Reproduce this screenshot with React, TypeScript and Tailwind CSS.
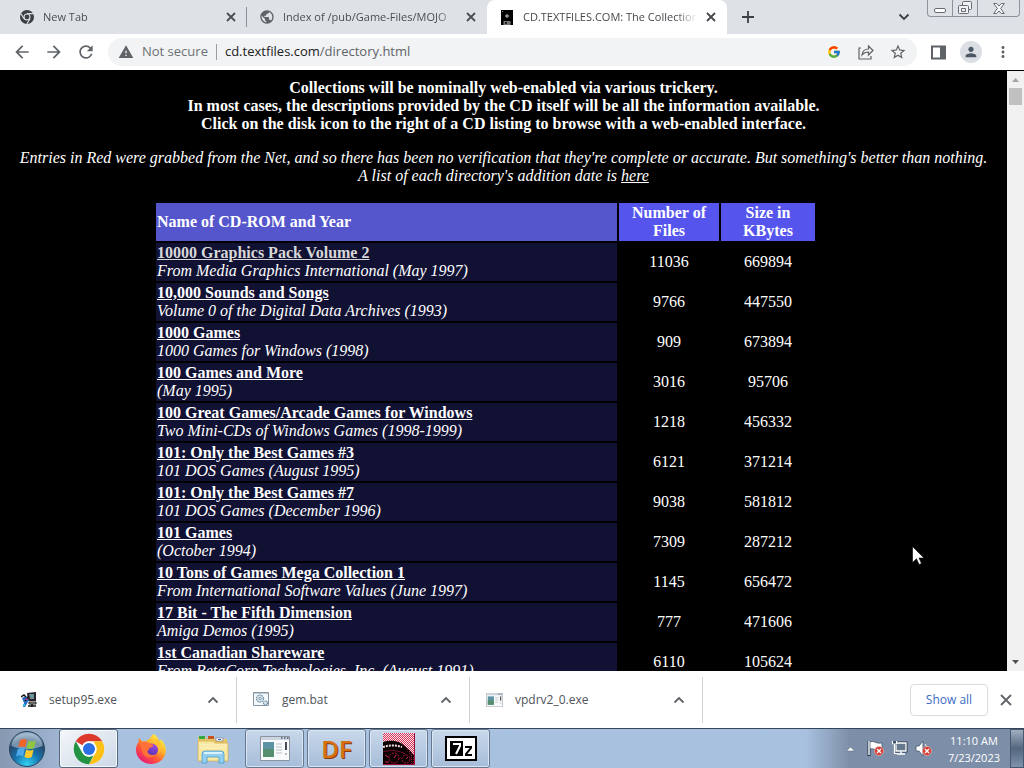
import type { ReactNode } from "react";
import { FcGoogle } from "react-icons/fc";
import {
  MdArrowBack,
  MdArrowForward,
  MdMoreVert,
  MdPerson,
  MdPublic,
  MdRefresh,
  MdStarBorder,
  MdWarning,
} from "react-icons/md";

type Entry = { name: string; note: string; files: string; size: string; visited?: boolean };

const entries: Entry[] = [
  { name: "10000 Graphics Pack Volume 2", note: "From Media Graphics International (May 1997)", files: "11036", size: "669894", visited: true },
  { name: "10,000 Sounds and Songs", note: "Volume 0 of the Digital Data Archives (1993)", files: "9766", size: "447550" },
  { name: "1000 Games", note: "1000 Games for Windows (1998)", files: "909", size: "673894" },
  { name: "100 Games and More", note: "(May 1995)", files: "3016", size: "95706" },
  { name: "100 Great Games/Arcade Games for Windows", note: "Two Mini-CDs of Windows Games (1998-1999)", files: "1218", size: "456332" },
  { name: "101: Only the Best Games #3", note: "101 DOS Games (August 1995)", files: "6121", size: "371214" },
  { name: "101: Only the Best Games #7", note: "101 DOS Games (December 1996)", files: "9038", size: "581812" },
  { name: "101 Games", note: "(October 1994)", files: "7309", size: "287212" },
  { name: "10 Tons of Games Mega Collection 1", note: "From International Software Values (June 1997)", files: "1145", size: "656472" },
  { name: "17 Bit - The Fifth Dimension", note: "Amiga Demos (1995)", files: "777", size: "471606" },
  { name: "1st Canadian Shareware", note: "From BetaCorp Technologies, Inc. (August 1991)", files: "6110", size: "105624" },
];

const lineIcons = {
  close: "M4 4l8 8M12 4l-8 8",
  plus: "M8 2v12M2 8h12",
  up: "M3.500 10.500L8 6l4.500 4.500",
  down: "M3.500 5.500L8 10l4.500-4.500",
};

function LineIcon({ kind }: { kind: keyof typeof lineIcons }) {
  return (
    <svg viewBox="0 0 16 16" className="size-4" fill="none" stroke="currentColor" strokeWidth="1.800" aria-hidden="true">
      <path d={lineIcons[kind]} />
    </svg>
  );
}

function ChromeMono() {
  return (
    <svg viewBox="0 0 16 16" className="size-4 shrink-0" aria-hidden="true">
      <circle cx="8" cy="8" r="7" fill="#3c4043" />
      <path d="M8 4.6h6.4M5 9.8 1.9 4.4M11 9.7 7.8 15" stroke="#dee1e6" strokeWidth="1.1" />
      <circle cx="8" cy="8" r="3.5" fill="#dee1e6" />
      <circle cx="8" cy="8" r="2.4" fill="#3c4043" />
    </svg>
  );
}

function FloppyIcon() {
  return (
    <svg viewBox="0 0 12 15" className="h-[15px] w-3 shrink-0" aria-hidden="true">
      <path d="M0 0h12v15H0z" fill="#000" />
      <path d="M6 4v4M4 6h4" stroke="#999" strokeWidth="1.4" />
      <path d="M2.5 11h7v4h-7z" fill="#777" />
      <path d="M4 12h2v2H4z" fill="#222" />
      <path d="M1 1h1v1H1z" fill="#888" />
    </svg>
  );
}

function ChromeLogo() {
  return (
    <svg viewBox="0 0 48 48" className="size-8" aria-hidden="true">
      <circle cx="24" cy="24" r="23" fill="#fff" />
      <path d="M24 1a23 23 0 0 1 19.9 11.5H24A11.5 11.5 0 0 0 14 18.2L4.1 12.5A23 23 0 0 1 24 1z" fill="#dc3a2c" />
      <path d="M43.9 12.5A23 23 0 0 1 24 47l9.9-17.2a11.5 11.5 0 0 0 0-11.5L30.5 12.5z" fill="#fbc116" />
      <path d="M24 47A23 23 0 0 1 4.1 12.5L14 29.7A11.5 11.5 0 0 0 24 35.5a11.5 11.5 0 0 0 6.8-2.2z" fill="#229342" />
      <circle cx="24" cy="24" r="11.3" fill="#fff" />
      <circle cx="24" cy="24" r="9" fill="#2a6fe4" />
    </svg>
  );
}

function FirefoxLogo() {
  return (
    <svg viewBox="0 0 32 32" className="size-8" aria-hidden="true">
      <defs>
        <linearGradient id="foxBody" x1="0.85" y1="0.1" x2="0.2" y2="0.95">
          <stop offset="0" stopColor="#fff14a" />
          <stop offset="0.35" stopColor="#ffb02a" />
          <stop offset="0.65" stopColor="#ff5634" />
          <stop offset="1" stopColor="#e8167c" />
        </linearGradient>
        <linearGradient id="foxGlobe" x1="0.7" y1="0" x2="0.3" y2="1">
          <stop offset="0" stopColor="#a14be8" />
          <stop offset="1" stopColor="#4d2fb0" />
        </linearGradient>
      </defs>
      <path d="M18.5 1c4 2.200 4.800 5 5.500 7l2-1.500c3.500 3.500 5.500 8 4.800 12.500C29.700 26.500 23.500 31 16 31S1.500 25.500 1 17.500C.8 14 2 11 3.500 9l.3-4 3.700 3.500c1.300-.3 2.500-.2 3.500.2C12.500 6.500 14 5.800 15.500 5.500 15.500 3.500 17 2 18.500 1z" fill="url(#foxBody)" />
      <circle cx="16.500" cy="17" r="6.500" fill="url(#foxGlobe)" />
      <path d="M5 11c3-3 7-3 9.500-.5 1.500 1 3 1 4 1.300-.2 2-2 2.700-4 3.200-.5 2-2 2.500-2 4 1.500 3.500 6 3.500 9 2-2 4-9 5-12.500 1C6.500 19.500 7 15 5 11z" fill="#ff7139" />
      <path d="M20 10.500c4 2 5 7 2.500 10.500 5-3 5-11-.5-15-1 1.500-1.500 3-2 4.500z" fill="#ffc22e" />
    </svg>
  );
}

function ExplorerIcon() {
  return (
    <svg viewBox="0 0 32 30" className="size-8" aria-hidden="true">
      <path d="M1 3h8l1 2h20v22H1z" fill="#e6c765" />
      <path d="M2 2h6v3H2z" fill="#36a746" />
      <path d="M11 2h6v3h-6z" fill="#c8501e" />
      <path d="M19 4h7v3h-7z" fill="#fff" stroke="#779" strokeWidth=".6" />
      <path d="M21 5h3v1h-3z" fill="#276bbd" />
      <path d="M1 7h15l2 2h13v18H1z" fill="#f9e8a0" stroke="#cfae52" strokeWidth=".7" />
      <path d="M3 11h26M3 14h26" stroke="#fdf4c8" />
      <path d="M5 29v-9q0-3 3-3h16q3 0 3 3v9h-5v-6H10v6z" fill="#91cff0" stroke="#4d9ccd" strokeWidth=".8" />
      <path d="M7 19h18" stroke="#d9f2ff" strokeWidth="2" />
    </svg>
  );
}

function AppWindow({ className }: { className: string }) {
  return (
    <svg viewBox="0 0 30 25" className={className} aria-hidden="true">
      <path d="M.5.5h29v24H.5z" fill="#f8fafb" stroke="#8b949e" />
      <path d="M1 1h28v3H1z" fill="#ccd6e0" />
      <path d="M21 2h1.500M24 2h1.500M27 2h1.500" stroke="#45566b" strokeWidth="1.500" />
      <path d="M3 6h11v15H3z" fill="#5b93a5" />
      <path d="M3 13h11v8H3z" fill="#568f70" />
      <path d="M16 8h6M16 11h6M16 14h6M16 17h6" stroke="#b9c0c5" />
      <path d="M26 6v8" stroke="#444d58" strokeWidth="2" />
      <path d="M25 17h2v2h-2z" fill="#bbb" />
    </svg>
  );
}

function StartOrb() {
  return (
    <svg viewBox="0 0 38 38" className="size-[38px]" aria-hidden="true">
      <defs>
        <radialGradient id="orb" cx="0.5" cy="0.95" r="0.85">
          <stop offset="0" stopColor="#35d3f4" />
          <stop offset="0.45" stopColor="#1573ae" />
          <stop offset="0.8" stopColor="#284a6c" />
          <stop offset="1" stopColor="#7190ad" />
        </radialGradient>
      </defs>
      <circle cx="19" cy="19" r="17.500" fill="url(#orb)" stroke="#29425d" />
      <path d="M3.500 16C5 7 11 2.500 19 2.500S33 7 34.500 16c-9 4-21 4-31 0z" fill="#d8e6f2" opacity=".45" />
      <path d="M12 10c3-1.500 5-1.300 7 0l-1.800 7.500c-2.300-1.200-4.700-1.200-7 0z" fill="#ed6529" />
      <path d="M20.500 10.500c2.500 1.300 5 1.200 7.500 0l-1.900 7.500c-2.500 1.200-5 1.200-7.400 0z" fill="#8fc743" />
      <path d="M9.800 19c2.500-1.300 4.800-1.200 7 0L15 26.500c-2.300-1.300-4.600-1.200-7 0z" fill="#4ca8e8" />
      <path d="M18.200 19.500c2.500 1.300 5 1.200 7.400 0l-1.800 7.500c-2.500 1.200-5 1.200-7.400 0z" fill="#fdc92f" />
    </svg>
  );
}

function DashboardIcon() {
  return (
    <svg viewBox="0 0 32 32" className="size-8" aria-hidden="true">
      <defs>
        <pattern id="redDither" width="2" height="2" patternUnits="userSpaceOnUse">
          <path d="M0 0h2v2H0z" fill="#d6305a" />
          <path d="M0 0h1v1H0zM1 1h1v1H1z" fill="#fbe6e8" />
        </pattern>
        <pattern id="darkDither" width="2" height="2" patternUnits="userSpaceOnUse">
          <path d="M0 0h2v2H0z" fill="#1a0308" />
          <path d="M0 0h1v1H0z" fill="#9d1836" />
        </pattern>
      </defs>
      <path d="M0 0h32v32H0z" fill="url(#redDither)" />
      <path d="M0 9c9-3 18-1 24 6 4 3 6 6 8 9v8H0z" fill="#080103" />
      <path d="M0 14c6-2 13-2 19 0" fill="none" stroke="#f4dde1" strokeWidth="2" strokeDasharray="2 1" />
      <path d="M22 15l5 3 4 6v7h-3l-1-9z" fill="url(#darkDither)" />
      <path d="M0 19c9-3 17-1 22 2" fill="none" stroke="#7a1028" />
      <circle cx="11" cy="25" r="5" fill="none" stroke="#b3183b" strokeDasharray="2 1" />
      <circle cx="23" cy="26" r="4" fill="none" stroke="#b3183b" strokeDasharray="2 1" />
      <path d="M11 25l2-3M23 26l2-2M2 22l3 2M2 29h4" stroke="#d82b4d" />
      <path d="M31 0h1v32H0v-1h31z" fill="#a00d34" />
    </svg>
  );
}

function SevenZip() {
  return (
    <svg viewBox="0 0 32 25" className="h-[25px] w-8" role="img" aria-label="7z">
      <path d="M1 1h30v23H1z" fill="#fff" stroke="#000" strokeWidth="2" />
      <path d="M5 5h13v15H5z" fill="#000" />
      <path d="M8 8h7v2l-4 8" fill="none" stroke="#fff" strokeWidth="2" />
      <path d="M20 11h6v1l-5 6v1h6" fill="none" stroke="#000" strokeWidth="2" />
    </svg>
  );
}

function SetupIcon() {
  return (
    <svg viewBox="0 0 16 16" className="size-4" aria-hidden="true">
      <path d="M6 1l9-1v9H7z" fill="#252525" />
      <path d="M8 2h5v5H9z" fill="#7e8790" />
      <path d="M10 3h2v2h-2z" fill="#35b5aa" />
      <path d="M1 6l4-2 3 4-4 7H2l1-4z" fill="#286fc7" />
      <path d="M0 5l3-2 2 2M8 4L4 9" fill="none" stroke="#161616" strokeWidth="1.500" />
      <path d="M4 8l2-2 1 2z" fill="#c43ab0" />
      <path d="M8 10h7v2H8z" fill="#aaa" stroke="#222" />
      <path d="M7 14h8M11 12v3" stroke="#111" strokeWidth="1.500" />
      <path d="M2 12h2v2H2z" fill="#35c5dd" />
    </svg>
  );
}

function BatchIcon() {
  return (
    <svg viewBox="0 0 17 15" className="h-[15px] w-[17px]" aria-hidden="true">
      <path d="M.5.5h15v13H.5z" fill="#f4f8fa" stroke="#8696a2" />
      <path d="M1 1.500h14" stroke="#bdc9d3" />
      <circle cx="7" cy="6.500" r="3.500" fill="#dce7ef" stroke="#7897ac" strokeWidth="1.300" strokeDasharray="1.500 .7" />
      <circle cx="7" cy="6.500" r="1.200" fill="#fff" stroke="#7897ac" />
      <circle cx="12.500" cy="11" r="2" fill="#dce7ef" stroke="#68889d" strokeWidth="1.200" strokeDasharray="1 .5" />
    </svg>
  );
}

function ErrorBadge() {
  return (
    <g>
      <circle cx="12" cy="11" r="4.500" fill="#d53a32" stroke="#eab4b0" strokeWidth=".7" />
      <path d="M10 9l4 4M14 9l-4 4" stroke="#fff" strokeWidth="1.400" />
    </g>
  );
}

function ActionFlag() {
  return (
    <svg viewBox="0 0 17 17" className="size-[17px]" aria-hidden="true">
      <path d="M2 1v15" stroke="#26384e" strokeWidth="3" />
      <path d="M3 2c4-2 5 2 12 1v7c-6 1-8-2-12-1z" fill="#fff" stroke="#38485d" strokeWidth=".7" />
      <path d="M2 1v14" stroke="#fff" strokeWidth="1.400" />
      <ErrorBadge />
    </svg>
  );
}

function NetworkIcon() {
  return (
    <svg viewBox="0 0 17 17" className="size-[17px]" aria-hidden="true">
      <path d="M5 3h10v8H5z" fill="#64788e" stroke="#26384e" strokeWidth="3" />
      <path d="M5 3h10v8H5z" fill="#64788e" stroke="#fff" strokeWidth="1.300" />
      <path d="M10 11.500v2M6 14h8" stroke="#fff" strokeWidth="1.500" />
      <path d="M1 1h5v4H1z" fill="#32465d" />
      <path d="M1.500 1v3h4V1M3.500 4v9.500H6" fill="none" stroke="#fff" strokeWidth="1.200" />
    </svg>
  );
}

function SpeakerIcon() {
  return (
    <svg viewBox="0 0 17 17" className="size-[17px]" aria-hidden="true">
      <path d="M1 6h3l4-5v15l-4-5H1z" fill="#fff" stroke="#44566d" strokeWidth=".8" />
      <path d="M10 4c2 2 2 6 0 9" fill="none" stroke="#fff" />
      <ErrorBadge />
    </svg>
  );
}

function Tab({ icon, title, active, divider }: { icon: ReactNode; title: string; active?: boolean; divider?: boolean }) {
  return (
    <div
      className={`relative flex h-full w-[240px] shrink-0 items-center pr-2 pl-3 text-[11px] ${active ? "rounded-t-lg bg-white text-[#45494d]" : "text-[#4a4e52]"}`}
    >
      <span className="flex w-4 shrink-0 justify-center">{icon}</span>
      <button className="ml-2 w-[174px] overflow-hidden text-left whitespace-nowrap [mask-image:linear-gradient(to_right,black_88%,transparent)]">
        {title}
      </button>
      <button aria-label={`Close ${title}`} className="ml-1.5">
        <LineIcon kind="close" />
      </button>
      {divider && <span className="absolute right-0 h-5 w-px bg-[#8b9096]" />}
    </div>
  );
}

function Download({ icon, name }: { icon: ReactNode; name: string }) {
  return (
    <div className="flex h-[46px] w-[233px] items-center border-r border-[#cfd1d4] pr-[15px] pl-4">
      <span className="flex w-[17px] justify-center">{icon}</span>
      <button className="ml-3 flex-1 text-left">{name}</button>
      <button aria-label={`Options for ${name}`} className="text-[#5f6368]">
        <LineIcon kind="up" />
      </button>
    </div>
  );
}

function TaskButton({ label, children, look }: { label: string; children: ReactNode; look: "plain" | "open" | "active" }) {
  const frame =
    look === "active"
      ? "border-[#56677e] bg-linear-to-br from-[#f4f6f9] to-[#ccd8e7] shadow-[inset_0_0_0_1px_#f4f8fc]"
      : look === "open"
        ? "border-[#65788f] bg-linear-to-b from-[#c9d8ea] to-[#a6bdd9] shadow-[inset_0_0_0_1px_#d9e5f2]"
        : "border-transparent";
  return (
    <button aria-label={label} className={`flex h-[39px] w-[59px] items-center justify-center rounded-[3px] border ${frame}`}>
      {children}
    </button>
  );
}

export default function App() {
  return (
    <div className="relative flex h-screen flex-col overflow-hidden bg-white font-['Open_Sans','Noto_Sans',sans-serif] text-xs text-[#3c4043]">
      <header className="shrink-0">
        <div className="flex h-[34px] items-stretch bg-[#dee1e6] pl-[7px]">
          <nav className="flex" aria-label="Tabs">
            <Tab icon={<ChromeMono />} title="New Tab" divider />
            <Tab icon={<MdPublic className="size-4 text-[#5f6368]" />} title="Index of /pub/Game-Files/MOJO" />
            <Tab icon={<FloppyIcon />} title="CD.TEXTFILES.COM: The Collection" active />
          </nav>
          <button aria-label="New tab" className="ml-[13px] self-center">
            <LineIcon kind="plus" />
          </button>
          <button aria-label="Search tabs" className="mr-[15px] ml-auto self-center">
            <LineIcon kind="down" />
          </button>
          <div className="mr-1 flex h-[17px] rounded-b border border-t-0 border-[#8d939c]">
            <button aria-label="Minimize" className="flex w-[25px] items-end justify-center border-r border-[#8d939c] pb-[3px]">
              <svg viewBox="0 0 12 5" className="h-[5px] w-3"><rect x=".5" y=".5" width="11" height="4" rx="1.500" fill="#fff" stroke="#666b73" /></svg>
            </button>
            <button aria-label="Restore" className="flex w-[25px] items-center justify-center border-r border-[#8d939c]">
              <svg viewBox="0 0 14 14" className="size-[14px]">
                <path d="M4.500 1.500q0-1 1-1h7q1 0 1 1v6q0 1-1 1h-2v3q0 1-1 1h-8q-1 0-1-1v-6q0-1 1-1h3z" fill="#f1f2f4" stroke="#666b73" />
                <path d="M4.500 4.500h5q1 0 1 1v3M3.500 7.500h4v3h-4z" fill="none" stroke="#666b73" />
              </svg>
            </button>
            <button aria-label="Close window" className="flex w-[41px] items-center justify-center">
              <svg viewBox="0 0 12 11" className="h-[11px] w-3"><path d="M.7.5h3L6 3 8.300.5h3L7.700 5.500l3.600 5h-3L6 8l-2.300 2.500h-3l3.600-5z" fill="#f5f6f7" stroke="#666b73" /></svg>
            </button>
          </div>
        </div>
        <div className="flex h-9 items-center px-3 text-[#5f6368]">
          <button aria-label="Back"><MdArrowBack className="size-5" /></button>
          <button aria-label="Forward" className="ml-3"><MdArrowForward className="size-5" /></button>
          <button aria-label="Reload" className="ml-3"><MdRefresh className="size-5" /></button>
          <div className="ml-3 flex h-7 flex-1 items-center rounded-full bg-[#f1f3f4] px-2.5 text-[13px]">
            <MdWarning className="size-4" />
            <span className="ml-2 text-[#6c7075]">Not secure</span>
            <span className="mx-2 h-4 w-px bg-[#9a9ea3]" />
            <div className="flex-1 whitespace-nowrap">
              <span className="text-[#202124]">cd.textfiles.com</span>/directory.html
            </div>
            <button aria-label="Search with Google"><FcGoogle className="size-[14px]" /></button>
            <button aria-label="Share" className="ml-4">
              <svg viewBox="0 0 18 16" className="h-4 w-[18px]" fill="none" stroke="#5f6368" strokeWidth="1.200">
                <path d="M4 4H2v11h12v-3" />
                <path d="M5 11c.5-4 3-6 6.500-6V2l4.500 4.500L11.500 11V8C9 8 7 8.500 5 11z" />
              </svg>
            </button>
            <button aria-label="Bookmark" className="ml-3.5"><MdStarBorder className="size-[18px]" /></button>
          </div>
          <button aria-label="Side panel" className="ml-3.5">
            <svg viewBox="0 0 15 15" className="size-[15px]"><path d="M1 1.500h13v12H1z" fill="none" stroke="#5f6368" strokeWidth="2" /><path d="M9 1h5v13H9z" fill="#5f6368" /></svg>
          </button>
          <button aria-label="Profile" className="ml-3.5 flex size-[22px] items-center justify-center rounded-full bg-[#dbdfe4] text-[#4a5866]">
            <MdPerson className="size-4" />
          </button>
          <button aria-label="Menu" className="ml-3"><MdMoreVert className="size-[18px]" /></button>
        </div>
      </header>

      <div className="flex min-h-0 flex-1 border-t border-black bg-black">
        <main className="min-w-0 flex-1 overflow-hidden pt-2 text-center font-['Liberation_Serif',serif] text-base leading-[18px] text-white">
          <p className="mb-4 font-bold">
            Collections will be nominally web-enabled via various trickery.
            <br />
            In most cases, the descriptions provided by the CD itself will be all the information available.
            <br />
            Click on the disk icon to the right of a CD listing to browse with a web-enabled interface.
          </p>
          <p className="mb-4 italic">
            Entries in Red were grabbed from the Net, and so there has been no verification that they're complete or accurate. But something's better than nothing.
            <br />
            A list of each directory's addition date is <a href="#dates" className="underline">here</a>
          </p>
          <table className="mx-auto w-[699px] table-fixed border-separate border-spacing-[2px]">
            <colgroup>
              <col className="w-[461px]" />
              <col className="w-[100px]" />
              <col className="w-[94px]" />
              <col />
            </colgroup>
            <thead>
              <tr>
                <th className="bg-[#5555cc] p-px text-left">Name of CD-ROM and Year</th>
                <th className="bg-[#5555ee] p-px">Number of<br />Files</th>
                <th className="bg-[#5555ee] p-px">Size in<br />KBytes</th>
                <td />
              </tr>
            </thead>
            <tbody>
              {entries.map((e) => (
                <tr key={e.name}>
                  <td className="bg-[#111133] p-px text-left">
                    <a href="#cd" className={`font-bold underline ${e.visited ? "text-[#d8d8d8]" : "text-white"}`}>{e.name}</a>
                    <br />
                    <i>{e.note}</i>
                  </td>
                  <td className="p-px">{e.files}</td>
                  <td className="p-px">{e.size}</td>
                  <td />
                </tr>
              ))}
            </tbody>
          </table>
        </main>
        <div className="flex w-[17px] shrink-0 flex-col items-center bg-[#f1f1f1]" aria-hidden="true">
          <svg viewBox="0 0 17 17" className="size-[17px]"><path d="M5 11l3.500-4 3.500 4z" fill="#a3a3a3" /></svg>
          <div className="h-[17px] w-[13px] bg-[#c1c1c1]" />
          <svg viewBox="0 0 17 17" className="mt-auto size-[17px]"><path d="M5 6l3.500 4L12 6z" fill="#505050" /></svg>
        </div>
      </div>

      <section aria-label="Downloads" className="flex h-[57px] shrink-0 items-center bg-white pr-2.5 pl-1 text-[#50545a]">
        <Download icon={<SetupIcon />} name="setup95.exe" />
        <Download icon={<BatchIcon />} name="gem.bat" />
        <Download icon={<AppWindow className="h-[14px] w-[17px]" />} name="vpdrv2_0.exe" />
        <button className="ml-auto h-8 w-[78px] rounded border border-[#dadce0] text-[#3c6bc4]">Show all</button>
        <button aria-label="Close downloads" className="ml-2.5 text-[#5f6368]">
          <svg viewBox="0 0 16 16" className="size-4"><path d="M3 3l10 10M13 3L3 13" stroke="currentColor" strokeWidth="1.800" /></svg>
        </button>
      </section>

      <footer className="flex h-10 shrink-0 items-center border-t border-[#34455b] bg-linear-to-r from-[#8798b1] via-[#a8c1df] via-8% to-[#a8c1df]">
        <button aria-label="Start" className="ml-2 flex w-[51px]"><StartOrb /></button>
        <div className="flex gap-[3px]">
          <TaskButton label="Google Chrome" look="active"><ChromeLogo /></TaskButton>
          <TaskButton label="Firefox" look="plain"><FirefoxLogo /></TaskButton>
          <TaskButton label="Explorer" look="plain"><ExplorerIcon /></TaskButton>
          <TaskButton label="Installer" look="open"><AppWindow className="h-[25px] w-[30px]" /></TaskButton>
          <TaskButton label="DF" look="open">
            <span className="text-2xl leading-none font-semibold text-[#d8700f] [text-shadow:1px_1px_0_#8c3b0c]">DF</span>
          </TaskButton>
          <TaskButton label="Dashboard" look="open"><DashboardIcon /></TaskButton>
          <TaskButton label="7-Zip" look="open"><SevenZip /></TaskButton>
        </div>
        <div className="ml-auto flex h-full items-center bg-linear-to-r from-transparent to-[#7d8fa8] to-20% pl-10 text-white">
          <button aria-label="Show hidden icons" className="mr-3">
            <svg viewBox="0 0 9 6" className="h-1.5 w-[9px]"><path d="M.5 5l4-4 4 4z" fill="#fff" stroke="#52647b" strokeWidth=".5" /></svg>
          </button>
          <div className="flex gap-[7px]">
            <ActionFlag />
            <NetworkIcon />
            <SpeakerIcon />
          </div>
          <time className="mr-2.5 ml-4 text-center text-[11px] leading-[17px]">
            11:10 AM
            <br />
            7/23/2023
          </time>
          <button aria-label="Show desktop" className="h-full w-[14px] border border-[#455870] bg-linear-to-b from-[#a2afbf] via-[#53677f] to-[#7e93ac]" />
        </div>
      </footer>

      <svg viewBox="0 0 12 19" className="pointer-events-none absolute top-[546px] left-[912px] h-[19px] w-3" aria-hidden="true">
        <path d="M.5.500v16l4-3.700 2.500 5.700 2.500-1-2.500-5.500h5z" fill="#fff" stroke="#000" strokeWidth=".6" />
      </svg>
    </div>
  );
}
